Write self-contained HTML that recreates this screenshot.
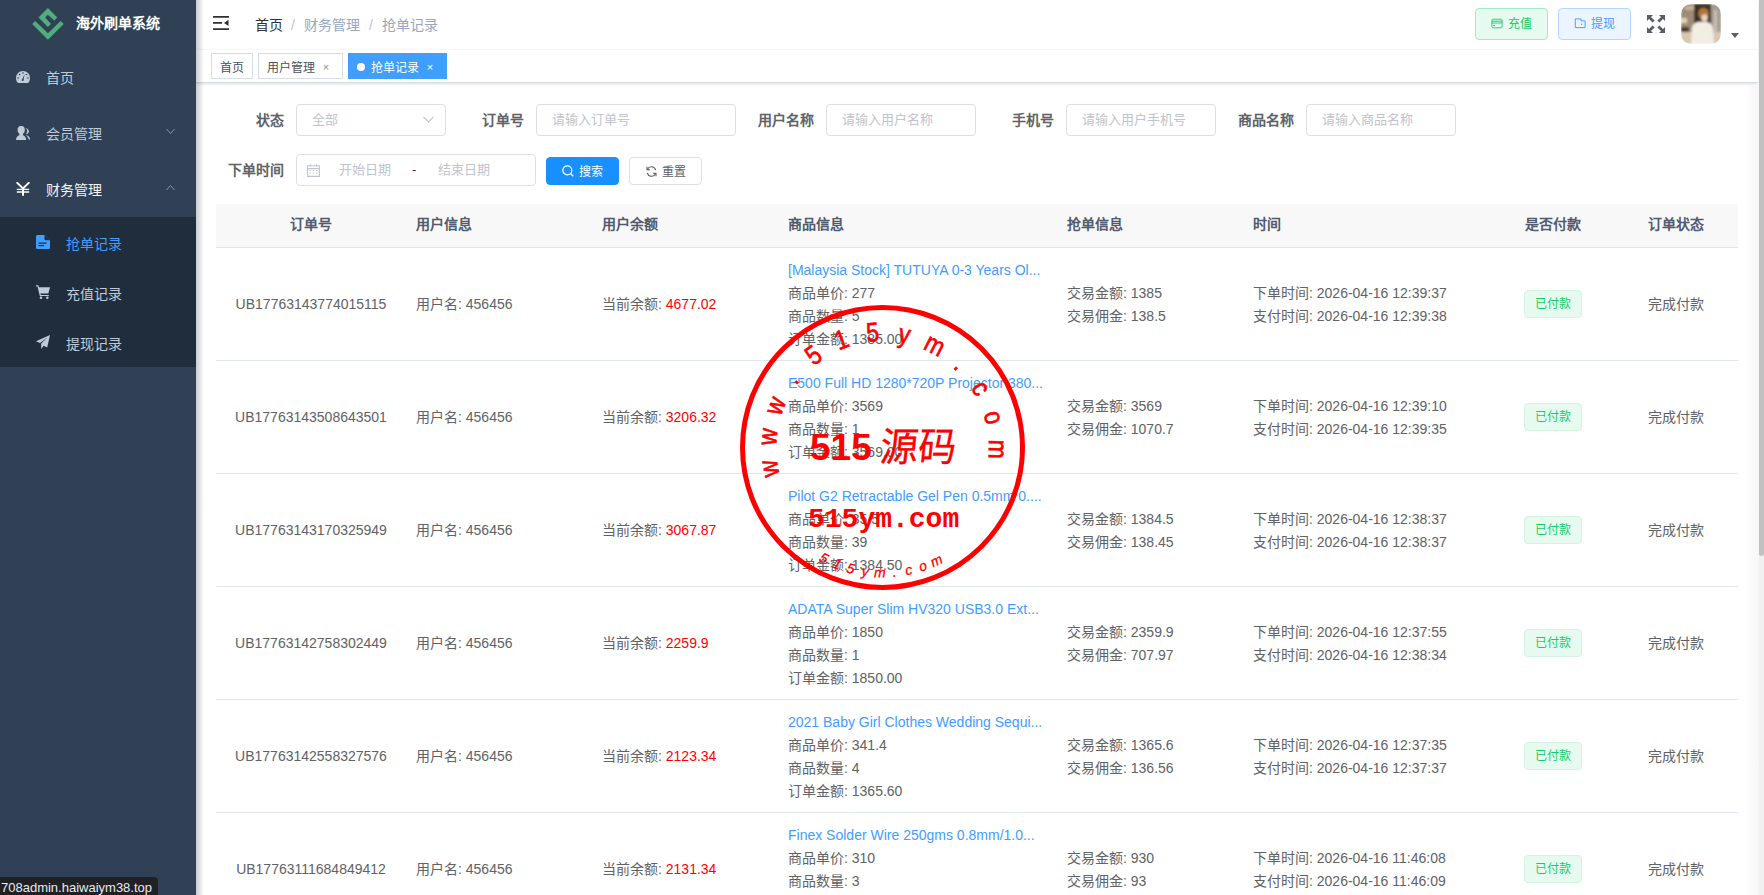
<!DOCTYPE html>
<html lang="zh-CN">
<head>
<meta charset="utf-8">
<title>抢单记录</title>
<style>
*{box-sizing:border-box;margin:0;padding:0}
html,body{width:1764px;height:895px;overflow:hidden;background:#fff}
body{font-family:"Liberation Sans",sans-serif;font-size:14px;color:#606266;position:relative}
.abs{position:absolute}
/* sidebar */
#side{position:absolute;left:0;top:0;width:196px;height:895px;background:#304156;z-index:3}
#logo{position:absolute;left:0;top:0;width:196px;height:50px}
#logo .t{position:absolute;left:76px;top:15px;font-size:14px;font-weight:bold;color:#fff;line-height:17px;white-space:nowrap}
.mi{position:absolute;left:0;width:196px;height:56px;color:#bfcbd9;font-size:14px}
.mi .tx{position:absolute;left:46px;top:0;line-height:56px;white-space:nowrap}
.mi .ic{position:absolute;left:16px}
.mi .ar{position:absolute;left:166px;top:22px;width:9px;height:7px}
#sub{position:absolute;left:0;top:217px;width:196px;height:150px;background:#1f2d3d}
.si{position:absolute;left:0;width:196px;height:50px;color:#bfcbd9}
.si .tx{position:absolute;left:66px;top:2px;line-height:50px;white-space:nowrap}
.si .ic{position:absolute;left:36px}
#sideshadow{position:absolute;left:196px;top:0;width:8px;height:895px;background:linear-gradient(to right,rgba(0,21,41,.22),rgba(0,21,41,0));z-index:2}
/* header */
#hdr{position:absolute;left:196px;top:0;width:1562px;height:50px;background:#fff;box-shadow:0 1px 4px rgba(0,21,41,.1);z-index:1}
.bc{position:absolute;top:0;line-height:50px;font-size:14px;white-space:nowrap}
.btn{position:absolute;border:1px solid;border-radius:4px;font-size:12px;white-space:nowrap}
/* tags */
#tags{position:absolute;left:196px;top:50px;width:1562px;height:33px;background:#fff;border-bottom:1px solid #d8dce5;box-shadow:0 1px 3px 0 rgba(0,0,0,.12),0 0 3px 0 rgba(0,0,0,.04);z-index:1}
.tag{position:absolute;top:3px;height:26px;line-height:24px;padding-top:2px!important;border:1px solid #d8dce5;color:#495060;background:#fff;font-size:12px;padding:0 8px;white-space:nowrap}
.tag .x{display:inline-block;width:16px;text-align:center;font-size:11px;color:#8a8f99;margin-left:3px;position:relative;top:-1px}
/* form */
.lbl{position:absolute;font-weight:bold;color:#606266;font-size:14px;line-height:32px;text-align:right;white-space:nowrap}
.inp{position:absolute;height:32px;border:1px solid #dcdfe6;border-radius:4px;background:#fff;color:#c0c4cc;font-size:13px;line-height:30px;padding-left:15px;white-space:nowrap}
/* table */
#tbl{position:absolute;left:216px;top:204px;width:1522px;border-collapse:collapse;table-layout:fixed;font-size:14px;color:#606266}
#tbl th{background:#f8f8f8;color:#515a6e;font-weight:bold;height:43px;text-align:left;padding:0 10px 2px;border-bottom:1px solid #dfe6ec;line-height:23px}
#tbl td{height:113px;border-bottom:1px solid #dfe6ec;padding:2px 10px 0;line-height:23px;vertical-align:middle;white-space:nowrap}
#tbl .c{text-align:center}
.red{color:#ff0000}
.blue{color:#409eff}
.ptag{display:inline-block;position:relative;top:-1px;height:28px;line-height:26px;padding:0 10px;border:1px solid #d0f5e0;background:#e7faf0;color:#13ce66;border-radius:4px;font-size:12px}
/* scrollbar */
#sb{position:absolute;left:1759px;top:0;width:5px;height:895px;background:#f1f1f1;z-index:5}
#sbg{position:absolute;left:1745px;top:84px;width:14px;height:811px;background:linear-gradient(to right,rgba(245,245,245,0),rgba(245,245,245,.9));z-index:5}
#sbt{position:absolute;left:0;top:0;width:5px;height:556px;background:#c1c1c1;border-radius:0 0 3px 3px}
#status{position:absolute;left:0;top:877px;width:158px;height:18px;background:#202124;color:#e8eaed;font-size:13px;line-height:19px;padding-left:1px;padding-top:1px;border-top-right-radius:4px;z-index:10;white-space:nowrap}
</style>
</head>
<body>
<!-- SIDEBAR -->
<div id="side">
  <div id="logo">
    <svg class="abs" style="left:0;top:0" width="80" height="50" viewBox="0 0 80 50">
      <polygon fill="#4fae7b" points="32.2,23.9 47.9,39.75 63.75,23.9 60.6,21 47.9,33.3 35.15,21"/>
      <polygon fill="#4fae7b" points="38.5,17.4 47.9,8 57.3,17.4 54.4,20.5 47.7,14.7 45.2,17.4 51,23.9 47.9,27"/>
    </svg>
    <div class="t">海外刷单系统</div>
  </div>
  <div class="mi" style="top:50px">
    <svg class="ic" style="top:71px;top:21px" width="14" height="12" viewBox="0 0 14 12"><path fill="#bfcbd9" d="M7 0C3.1 0 0 3.1 0 7c0 1.8.6 3.5 1.7 4.8L2 12h10l.3-.2C13.4 10.5 14 8.8 14 7c0-3.9-3.1-7-7-7z"/><g fill="#304156"><circle cx="7" cy="2" r=".8"/><circle cx="3.5" cy="3.5" r=".8"/><circle cx="10.5" cy="3.5" r=".8"/><circle cx="2" cy="7" r=".8"/><circle cx="12" cy="7" r=".8"/><path d="M8.6 3.2L7.6 8.3a1 1 0 1 1-1.2-.3z"/></g></svg>
    <div class="tx">首页</div>
  </div>
  <div class="mi" style="top:106px">
    <svg class="ic" style="top:20px" width="14" height="14" viewBox="0 0 14 14"><g fill="#c0cbd9"><ellipse cx="5.2" cy="4" rx="3.6" ry="4.1"/><path d="M3.4 6.5h3.6v3H3.4z"/><path d="M0 14C0 11 1.8 9 5.1 9 8.4 9 10.2 11 10.2 14z"/><path d="M9.2 1.9C11.4 2.2 13 3.6 13 5.2 13 6.8 11.6 8 9.8 8.3 10.8 7 11.2 6 11.2 5 11.2 3.8 10.5 2.7 9.2 1.9z"/><path d="M9.6 9C12.2 9.5 14.1 11.2 14.1 13.6H12.6C12.3 11.6 11.3 10.1 9.6 9z"/></g></svg>
    <div class="tx">会员管理</div>
    <svg class="ar" viewBox="0 0 9 7"><path d="M.5 1L4.5 5.5 8.5 1" fill="none" stroke="#909399" stroke-width="1"/></svg>
  </div>
  <div class="mi" style="top:162px;color:#f4f4f5">
    <svg class="ic" style="top:20px" width="14" height="14" viewBox="0 0 14 14"><path d="M.6.3L7 6.4 13.4.3" fill="none" stroke="#fff" stroke-width="2"/><path d="M.8 7.4H13.2M.8 10H13.2" stroke="#fff" stroke-width="1.3"/><path d="M7 6.2V13.8" stroke="#fff" stroke-width="2"/></svg>
    <div class="tx">财务管理</div>
    <svg class="ar" viewBox="0 0 9 7"><path d="M.5 6L4.5 1.5 8.5 6" fill="none" stroke="#909399" stroke-width="1"/></svg>
  </div>
  <div id="sub">
    <div class="si" style="top:0;color:#409eff">
      <svg class="ic" style="top:18px" width="14" height="14" viewBox="0 0 14 14"><path fill="#409eff" d="M1.5 0H8.5L14 5.2V12.8A1.2 1.2 0 0 1 12.8 14H1.2A1.2 1.2 0 0 1 0 12.8V1.5A1.5 1.5 0 0 1 1.5 0z"/><path fill="#1f2d3d" d="M8.5 0V4A1.2 1.2 0 0 0 9.7 5.2H14zM2.5 7.5h8v1.3h-8zM2.5 10h5.5v1.3H2.5z"/></svg>
      <div class="tx">抢单记录</div>
    </div>
    <div class="si" style="top:50px">
      <svg class="ic" style="top:18px" width="14" height="14" viewBox="0 0 14 14"><path fill="#bfcbd9" d="M0 .3h2.3l.6 2H14l-1.6 6.3H4.4l.4 1.3h8v1.2H3.8L1.5 1.5H0z"/><circle fill="#bfcbd9" cx="5" cy="12.7" r="1.3"/><circle fill="#bfcbd9" cx="11.3" cy="12.7" r="1.3"/></svg>
      <div class="tx">充值记录</div>
    </div>
    <div class="si" style="top:100px">
      <svg class="ic" style="top:18px" width="14" height="14" viewBox="0 0 14 14"><path fill="#bfcbd9" d="M14 0L0 6.3l4 1.6L12 2 5.2 8.5V14l2.5-3.3 3.5 1.7z"/></svg>
      <div class="tx">提现记录</div>
    </div>
  </div>
</div>
<div id="sideshadow"></div>

<!-- HEADER -->
<div id="hdr">
  <svg class="abs" style="left:17px;top:16px" width="16" height="14" viewBox="0 0 16 14"><path fill="#303133" d="M0 0h16v1.8H0zM0 6h9v1.8H0zM0 12.2h16V14H0zM11 6.9L15.5 3.8V10z"/></svg>
  <div class="bc" style="left:59px;color:#303133">首页</div>
  <div class="bc" style="left:95px;color:#c0c4cc">/</div>
  <div class="bc" style="left:108px;color:#97a8be">财务管理</div>
  <div class="bc" style="left:173px;color:#c0c4cc">/</div>
  <div class="bc" style="left:186px;color:#97a8be">抢单记录</div>

  <div class="btn" style="left:1279px;top:8px;width:73px;height:32px;background:#e7faf0;border-color:#a1ebc2;color:#13ce66">
    <svg class="abs" style="left:15px;top:9px" width="12" height="12" viewBox="0 0 12 12"><rect x=".9" y="1.2" width="10.2" height="8.6" rx="1.2" fill="none" stroke="#13ce66" stroke-width=".9"/><path d="M.9 3.2h10.2M.9 5h10.2" stroke="#13ce66" stroke-width=".9"/><path d="M2.2 7.5h2" stroke="#13ce66" stroke-width=".9"/></svg>
    <span class="abs" style="left:32px;top:0;line-height:30px">充值</span>
  </div>
  <div class="btn" style="left:1362px;top:8px;width:73px;height:32px;background:#ecf5ff;border-color:#b3d8ff;color:#409eff">
    <svg class="abs" style="left:15px;top:9px" width="12" height="12" viewBox="0 0 12 12"><path d="M1.3 9.6V.9H7V2.9H11.1V9.6z" fill="none" stroke="#409eff" stroke-width=".95"/><circle cx="7.7" cy="6.2" r=".75" fill="#409eff"/></svg>
    <span class="abs" style="left:32px;top:0;line-height:30px">提现</span>
  </div>
  <svg class="abs" style="left:1451px;top:15px" width="18" height="18" viewBox="0 0 18 18"><g fill="#5a5e66"><path d="M0 0h6L4 2l3.6 3.6-2 2L2 4l-2 2z"/><path d="M18 0v6l-2-2-3.6 3.6-2-2L14 2l-2-2z"/><path d="M0 18v-6l2 2 3.6-3.6 2 2L4 16l2 2z"/><path d="M18 18h-6l2-2-3.6-3.6 2-2L16 14l2-2z"/></g></svg>
  <svg class="abs" style="left:1485px;top:4px" width="40" height="40" viewBox="0 0 40 40">
    <defs><clipPath id="av"><rect width="40" height="40" rx="10"/></clipPath><filter id="avb" x="-10%" y="-10%" width="120%" height="120%"><feGaussianBlur stdDeviation="1.1"/></filter></defs>
    <g clip-path="url(#av)"><g filter="url(#avb)">
      <rect width="40" height="40" fill="#a8957f"/>
      <rect x="0" y="0" width="14" height="29" fill="#a08b74"/>
      <rect x="0" y="14" width="6" height="5" fill="#e2d2b2"/>
      <rect x="4" y="2" width="9" height="4" fill="#c4b39c"/>
      <rect x="0" y="23" width="8" height="5" fill="#4a3b2e"/>
      <rect x="13" y="0" width="18" height="22" fill="#3b3025"/>
      <rect x="30" y="0" width="10" height="31" fill="#a39b8e"/>
      <rect x="33" y="6" width="3" height="25" fill="#c9c1b3"/>
      <rect x="0" y="28" width="40" height="12" fill="#d8c6b1"/>
      <path d="M10 40L11 23Q13 18 18 18L26 18Q31 19 32 24L33 40z" fill="#f2eee4"/>
      <ellipse cx="22.5" cy="9.5" rx="5.3" ry="5.8" fill="#b5743e"/>
      <ellipse cx="23.5" cy="14" rx="3.2" ry="3.8" fill="#e8d4c4"/>
    </g></g>
  </svg>
  <svg class="abs" style="left:1535px;top:33px" width="8" height="5" viewBox="0 0 8 5"><path d="M0 0h8L4 5z" fill="#5a5e66"/></svg>
</div>

<!-- TAGS -->
<div id="tags">
  <div class="tag" style="left:15px">首页</div>
  <div class="tag" style="left:62px">用户管理<span class="x">×</span></div>
  <div class="tag" style="left:152px;background:#409eff;border-color:#409eff;color:#fff;padding-left:8px"><span style="display:inline-block;width:8px;height:8px;border-radius:50%;background:#fff;margin-right:6px;vertical-align:0;position:relative;top:-1px"></span>抢单记录<span class="x" style="color:#fff">×</span></div>
</div>

<!-- FORM -->
<div class="lbl" style="left:216px;top:104px;width:68px">状态</div>
<div class="inp" style="left:296px;top:104px;width:150px">全部
  <svg class="abs" style="left:126px;top:11px" width="11" height="7" viewBox="0 0 11 7"><path d="M.5.8L5.5 6 10.5.8" fill="none" stroke="#c0c4cc" stroke-width="1.1"/></svg>
</div>
<div class="lbl" style="left:456px;top:104px;width:68px">订单号</div>
<div class="inp" style="left:536px;top:104px;width:200px">请输入订单号</div>
<div class="lbl" style="left:746px;top:104px;width:68px">用户名称</div>
<div class="inp" style="left:826px;top:104px;width:150px">请输入用户名称</div>
<div class="lbl" style="left:986px;top:104px;width:68px">手机号</div>
<div class="inp" style="left:1066px;top:104px;width:150px">请输入用户手机号</div>
<div class="lbl" style="left:1226px;top:104px;width:68px">商品名称</div>
<div class="inp" style="left:1306px;top:104px;width:150px">请输入商品名称</div>

<div class="lbl" style="left:216px;top:154px;width:68px">下单时间</div>
<div class="inp" style="left:296px;top:154px;width:240px;padding:0">
  <svg class="abs" style="left:10px;top:9px" width="13" height="13" viewBox="0 0 13 13"><path d="M.6 1.8h11.8v10.6H.6zM.6 4.6h11.8M3.5.2v2.6M9.5.2v2.6" fill="none" stroke="#c0c4cc" stroke-width="1.1"/><path d="M2.5 6.5h1.5M5.8 6.5h1.5M9 6.5h1.5M2.5 9h1.5M5.8 9h1.5M9 9h1.5" stroke="#c0c4cc" stroke-width="1"/></svg>
  <span class="abs" style="left:42px">开始日期</span>
  <span class="abs" style="left:115px;color:#303133">-</span>
  <span class="abs" style="left:141px">结束日期</span>
</div>
<div class="btn" style="left:546px;top:157px;width:73px;height:28px;background:#1890ff;border-color:#1890ff;color:#fff">
  <svg class="abs" style="left:15px;top:7px" width="12" height="12" viewBox="0 0 12 12"><circle cx="5.3" cy="5.3" r="4.5" fill="none" stroke="#fff" stroke-width="1.2"/><path d="M8.5 8.5L11.3 11.3" stroke="#fff" stroke-width="1.3"/></svg>
  <span class="abs" style="left:32px;top:1px;line-height:26px">搜索</span>
</div>
<div class="btn" style="left:629px;top:157px;width:73px;height:28px;background:#fff;border-color:#dcdfe6;color:#606266">
  <svg class="abs" style="left:16px;top:8px" width="11" height="11" viewBox="0 0 11 11"><path d="M9.6 4.2A4.3 4.3 0 0 0 1.6 3M1.4 6.8A4.3 4.3 0 0 0 9.4 8" fill="none" stroke="#606266" stroke-width="1.1"/><path d="M1 .8v2.8h2.8M10 10.2V7.4H7.2" fill="none" stroke="#606266" stroke-width="1.1"/></svg>
  <span class="abs" style="left:32px;top:1px;line-height:26px">重置</span>
</div>

<!-- TABLE -->
<table id="tbl">
  <colgroup><col style="width:190px"><col style="width:186px"><col style="width:186px"><col style="width:279px"><col style="width:186px"><col style="width:249px"><col style="width:122px"><col style="width:124px"></colgroup>
  <thead><tr><th class="c">订单号</th><th>用户信息</th><th>用户余额</th><th>商品信息</th><th>抢单信息</th><th>时间</th><th class="c">是否付款</th><th class="c">订单状态</th></tr></thead>
  <tbody>
<tr><td class="c">UB17763143774015115</td><td>用户名: 456456</td><td>当前余额: <span class="red">4677.02</span></td><td><div class="blue">[Malaysia Stock] TUTUYA 0-3 Years Ol...</div><div>商品单价: 277</div><div>商品数量: 5</div><div>订单金额: 1385.00</div></td><td><div>交易金额: 1385</div><div>交易佣金: 138.5</div></td><td><div>下单时间: 2026-04-16 12:39:37</div><div>支付时间: 2026-04-16 12:39:38</div></td><td class="c"><span class="ptag">已付款</span></td><td class="c">完成付款</td></tr>
<tr><td class="c">UB17763143508643501</td><td>用户名: 456456</td><td>当前余额: <span class="red">3206.32</span></td><td><div class="blue">E500 Full HD 1280*720P Projector 380...</div><div>商品单价: 3569</div><div>商品数量: 1</div><div>订单金额: 3569.00</div></td><td><div>交易金额: 3569</div><div>交易佣金: 1070.7</div></td><td><div>下单时间: 2026-04-16 12:39:10</div><div>支付时间: 2026-04-16 12:39:35</div></td><td class="c"><span class="ptag">已付款</span></td><td class="c">完成付款</td></tr>
<tr><td class="c">UB17763143170325949</td><td>用户名: 456456</td><td>当前余额: <span class="red">3067.87</span></td><td><div class="blue">Pilot G2 Retractable Gel Pen 0.5mm 0....</div><div>商品单价: 35.5</div><div>商品数量: 39</div><div>订单金额: 1384.50</div></td><td><div>交易金额: 1384.5</div><div>交易佣金: 138.45</div></td><td><div>下单时间: 2026-04-16 12:38:37</div><div>支付时间: 2026-04-16 12:38:37</div></td><td class="c"><span class="ptag">已付款</span></td><td class="c">完成付款</td></tr>
<tr><td class="c">UB17763142758302449</td><td>用户名: 456456</td><td>当前余额: <span class="red">2259.9</span></td><td><div class="blue">ADATA Super Slim HV320 USB3.0 Ext...</div><div>商品单价: 1850</div><div>商品数量: 1</div><div>订单金额: 1850.00</div></td><td><div>交易金额: 2359.9</div><div>交易佣金: 707.97</div></td><td><div>下单时间: 2026-04-16 12:37:55</div><div>支付时间: 2026-04-16 12:38:34</div></td><td class="c"><span class="ptag">已付款</span></td><td class="c">完成付款</td></tr>
<tr><td class="c">UB17763142558327576</td><td>用户名: 456456</td><td>当前余额: <span class="red">2123.34</span></td><td><div class="blue">2021 Baby Girl Clothes Wedding Sequi...</div><div>商品单价: 341.4</div><div>商品数量: 4</div><div>订单金额: 1365.60</div></td><td><div>交易金额: 1365.6</div><div>交易佣金: 136.56</div></td><td><div>下单时间: 2026-04-16 12:37:35</div><div>支付时间: 2026-04-16 12:37:37</div></td><td class="c"><span class="ptag">已付款</span></td><td class="c">完成付款</td></tr>
<tr><td class="c">UB17763111684849412</td><td>用户名: 456456</td><td>当前余额: <span class="red">2131.34</span></td><td><div class="blue">Finex Solder Wire 250gms 0.8mm/1.0...</div><div>商品单价: 310</div><div>商品数量: 3</div><div>订单金额: 930.00</div></td><td><div>交易金额: 930</div><div>交易佣金: 93</div></td><td><div>下单时间: 2026-04-16 11:46:08</div><div>支付时间: 2026-04-16 11:46:09</div></td><td class="c"><span class="ptag">已付款</span></td><td class="c">完成付款</td></tr>
</tbody>
</table>

<!-- STAMP -->
<svg class="abs" style="left:0;top:0;z-index:4;pointer-events:none" width="1764" height="895" viewBox="0 0 1764 895">
<g fill="#ff0000">
<circle cx="882.5" cy="447.5" r="140" fill="none" stroke="#ff0000" stroke-width="5"/>
<text transform="translate(768.5,468.8) rotate(259.4) scale(.85,1)" text-anchor="middle" dominant-baseline="central" font-family="Liberation Sans" font-size="27" stroke="#ff0000" stroke-width=".7">w</text>
<text transform="translate(767.0,436.7) rotate(275.4) scale(.85,1)" text-anchor="middle" dominant-baseline="central" font-family="Liberation Sans" font-size="27" stroke="#ff0000" stroke-width=".7">w</text>
<text transform="translate(774.4,405.4) rotate(291.3) scale(.85,1)" text-anchor="middle" dominant-baseline="central" font-family="Liberation Sans" font-size="27" stroke="#ff0000" stroke-width=".7">w</text>
<text transform="translate(790.2,377.3) rotate(307.2) scale(.85,1)" text-anchor="middle" dominant-baseline="central" font-family="Liberation Sans" font-size="27" stroke="#ff0000" stroke-width=".7">.</text>
<text transform="translate(813.0,354.6) rotate(323.2) scale(.85,1)" text-anchor="middle" dominant-baseline="central" font-family="Liberation Sans" font-size="27" stroke="#ff0000" stroke-width=".7">5</text>
<text transform="translate(841.2,339.1) rotate(339.1) scale(.85,1)" text-anchor="middle" dominant-baseline="central" font-family="Liberation Sans" font-size="27" stroke="#ff0000" stroke-width=".7">1</text>
<text transform="translate(872.6,331.9) rotate(355.1) scale(.85,1)" text-anchor="middle" dominant-baseline="central" font-family="Liberation Sans" font-size="27" stroke="#ff0000" stroke-width=".7">5</text>
<text transform="translate(904.7,333.7) rotate(371.1) scale(.85,1)" text-anchor="middle" dominant-baseline="central" font-family="Liberation Sans" font-size="27" stroke="#ff0000" stroke-width=".7">y</text>
<text transform="translate(935.2,344.1) rotate(387.0) scale(.85,1)" text-anchor="middle" dominant-baseline="central" font-family="Liberation Sans" font-size="27" stroke="#ff0000" stroke-width=".7">m</text>
<text transform="translate(961.5,362.6) rotate(402.9) scale(.85,1)" text-anchor="middle" dominant-baseline="central" font-family="Liberation Sans" font-size="27" stroke="#ff0000" stroke-width=".7">.</text>
<text transform="translate(981.8,387.6) rotate(418.9) scale(.85,1)" text-anchor="middle" dominant-baseline="central" font-family="Liberation Sans" font-size="27" stroke="#ff0000" stroke-width=".7">c</text>
<text transform="translate(994.5,417.2) rotate(434.9) scale(.85,1)" text-anchor="middle" dominant-baseline="central" font-family="Liberation Sans" font-size="27" stroke="#ff0000" stroke-width=".7">o</text>
<text transform="translate(998.5,449.1) rotate(450.8) scale(.85,1)" text-anchor="middle" dominant-baseline="central" font-family="Liberation Sans" font-size="27" stroke="#ff0000" stroke-width=".7">m</text>
<text transform="translate(824.2,558.1) rotate(27.8) skewX(-10)" text-anchor="middle" dominant-baseline="central" font-family="Liberation Sans" font-size="14" stroke="#ff0000" stroke-width=".3">5</text>
<text transform="translate(837.4,564.1) rotate(21.1) skewX(-10)" text-anchor="middle" dominant-baseline="central" font-family="Liberation Sans" font-size="14" stroke="#ff0000" stroke-width=".3">1</text>
<text transform="translate(851.2,568.5) rotate(14.5) skewX(-10)" text-anchor="middle" dominant-baseline="central" font-family="Liberation Sans" font-size="14" stroke="#ff0000" stroke-width=".3">5</text>
<text transform="translate(865.5,571.3) rotate(7.8) skewX(-10)" text-anchor="middle" dominant-baseline="central" font-family="Liberation Sans" font-size="14" stroke="#ff0000" stroke-width=".3">y</text>
<text transform="translate(880.0,572.5) rotate(1.2) skewX(-10)" text-anchor="middle" dominant-baseline="central" font-family="Liberation Sans" font-size="14" stroke="#ff0000" stroke-width=".3">m</text>
<text transform="translate(894.5,571.9) rotate(-5.5) skewX(-10)" text-anchor="middle" dominant-baseline="central" font-family="Liberation Sans" font-size="14" stroke="#ff0000" stroke-width=".3">.</text>
<text transform="translate(908.8,569.7) rotate(-12.2) skewX(-10)" text-anchor="middle" dominant-baseline="central" font-family="Liberation Sans" font-size="14" stroke="#ff0000" stroke-width=".3">c</text>
<text transform="translate(922.8,565.8) rotate(-18.8) skewX(-10)" text-anchor="middle" dominant-baseline="central" font-family="Liberation Sans" font-size="14" stroke="#ff0000" stroke-width=".3">o</text>
<text transform="translate(936.3,560.3) rotate(-25.5) skewX(-10)" text-anchor="middle" dominant-baseline="central" font-family="Liberation Sans" font-size="14" stroke="#ff0000" stroke-width=".3">m</text>
<text x="810" y="460" font-family="Liberation Sans" font-weight="bold" font-size="37">515</text>
<text transform="translate(879,461) scale(1,1.05) skewX(-6)" font-family="Liberation Serif, serif" font-weight="normal" font-size="38" stroke="#ff0000" stroke-width=".3">源码</text>
<text x="808" y="527" font-family="Liberation Mono" font-weight="bold" font-size="28">515ym.com</text>
</g></svg>
<div id="sbg"></div><div id="sb"><div id="sbt"></div></div>
<div id="status">708admin.haiwaiym38.top</div>
</body>
</html>
